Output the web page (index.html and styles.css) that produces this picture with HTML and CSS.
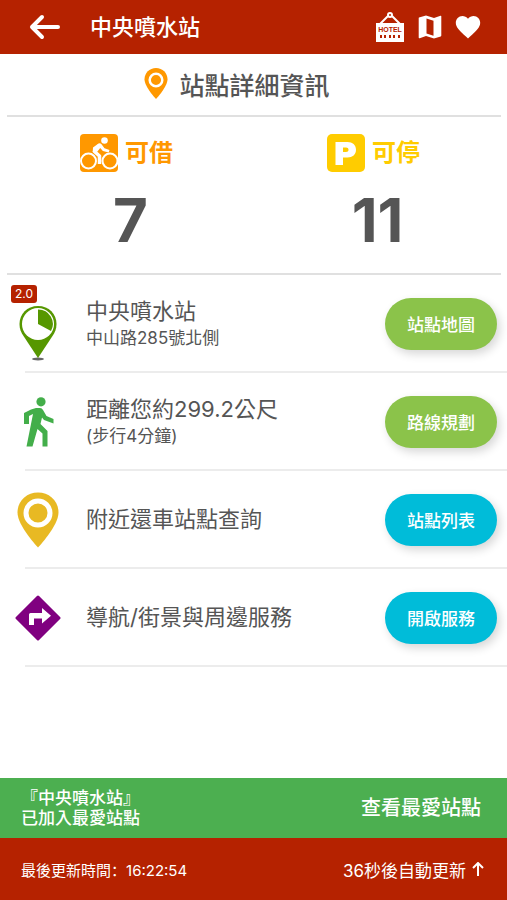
FILE: index.html
```html
<!DOCTYPE html>
<html lang="zh-Hant">
<head>
  <meta charset="UTF-8" />
  <meta name="viewport" content="width=device-width, initial-scale=1" />
  <title>中央噴水站</title>
  <link rel="stylesheet" href="styles.css">
</head>
<body>

<header class="topbar">
  <button class="icon-btn back" type="button" aria-label="返回">
    <svg width="32" height="28" viewBox="0 0 32 28" fill="none" stroke="#fff" stroke-width="4" stroke-linecap="round" stroke-linejoin="round"><path d="M14 4L4 14l10 10M4 14h26"/></svg>
  </button>
  <h1>中央噴水站</h1>
  <nav class="actions">
    <button class="icon-btn" type="button" aria-label="旅館">
      <svg width="30" height="30" viewBox="0 0 30 30">
        <path d="M5 12L13 4M17 4l8 8" fill="none" stroke="#fff" stroke-width="2"/>
        <circle cx="15" cy="3" r="2" fill="none" stroke="#fff" stroke-width="2"/>
        <path d="M1 11h28v19H1z" fill="#fff"/>
        <text x="15" y="20" class="hotel-text" text-anchor="middle">HOTEL</text>
        <path d="M5 23h2v3H5zM9 23h2v3H9zM14 23h2v3h-2zM18 23h2v3h-2zM23 23h2v3h-2z" fill="#b52200"/>
      </svg>
    </button>
    <button class="icon-btn" type="button" aria-label="地圖">
      <svg width="24" height="24" viewBox="0 0 24 24" fill="#fff"><path fill-rule="evenodd" d="M1 2.500L8 0.500l8 2.500 6.500-2.300q.8-.2.800.6V20.500q0 .7-.6.900L16 23.500 8 21 1.700 23.300q-1 .3-1-.7V3.200q0-.5.300-.7zM8.500 3.500v15l7 2.200v-15z"/></svg>
    </button>
    <button class="icon-btn" type="button" aria-label="最愛">
      <svg width="26" height="24" viewBox="0 0 26 24" fill="#fff"><path d="M13 23.500l-1.800-1.700C4.800 16 .8 12.300.8 7.800.8 4 3.700 1 7.400 1c2.100 0 4.200 1 5.600 2.700C14.400 2 16.500 1 18.600 1c3.700 0 6.600 3 6.600 6.800 0 4.500-4 8.200-10.400 14z"/></svg>
    </button>
  </nav>
</header>

<main>
  <h2 class="section-title">
    <svg width="24" height="31" viewBox="0 0 24 31"><path fill="#ff9800" d="M12 0C5.400 0 .5 5 .5 11.300.5 19 12 31 12 31s11.500-12 11.500-19.700C23.500 5 18.600 0 12 0z"/><circle cx="12" cy="12" r="6.300" fill="#ff9800" stroke="#fff" stroke-width="2.500"/></svg>
    站點詳細資訊
  </h2>

  <section class="stats">
    <div class="stat">
      <div class="stat-label rent">
        <svg width="38" height="38" viewBox="0 0 38 38">
          <rect width="38" height="38" rx="4" fill="#ff9800"/>
          <g fill="none" stroke="#fff" stroke-width="2"><circle cx="8.500" cy="27" r="7.500"/><circle cx="30" cy="27" r="7.500"/></g>
          <circle cx="24.500" cy="6.500" r="3.300" fill="#fff"/>
          <path d="M19 11.500L14.500 17.500l5 4.500v8" fill="none" stroke="#fff" stroke-width="3.500" stroke-linejoin="round"/>
          <path d="M13 13.500l5.500-4q1.700-.8 2.800.5l3.200 4.200 5 1.800-.8 2.500-5.800-1.500-2.700-3-4 5-3.500-1z" fill="#fff"/>
        </svg>
        可借
      </div>
      <div class="count">7</div>
    </div>
    <div class="stat">
      <div class="stat-label park">
        <svg width="38" height="38" viewBox="0 0 38 38">
          <rect width="38" height="38" rx="5" fill="#ffcc00"/>
          <path fill="#fff" fill-rule="evenodd" d="M8.500 8h12c5 0 8.500 3 8.500 7.800s-3.500 7.700-8.500 7.700h-4.500V31H8.500zM16 13.500v4.500h3c1.500 0 2.500-.8 2.500-2.200s-1-2.300-2.500-2.300z"/>
        </svg>
        可停
      </div>
      <div class="count">11</div>
    </div>
  </section>

  <ul class="rows">
    <li class="row">
      <div class="row-icon">
        <span class="version">2.0</span>
        <svg class="station-pin" width="40" height="56" viewBox="0 0 40 56">
          <ellipse cx="20" cy="53" rx="6" ry="1.500" fill="#666"/>
          <path fill="#569700" d="M20 0C9 0 1.500 8 1.500 18c0 5 1.500 8 4 12L20 52l14.500-22c2.500-4 4-7 4-12C38.500 8 31 0 20 0z"/>
          <circle cx="20" cy="18" r="16" fill="#fff"/>
          <path fill="#569700" d="M20 18V3.500A14.500 14.500 0 0 1 33 25z"/>
        </svg>
      </div>
      <div class="info">
        <p class="name">中央噴水站</p>
        <p class="sub">中山路285號北側</p>
      </div>
      <button class="pill green" type="button">站點地圖</button>
    </li>
    <li class="row">
      <div class="row-icon">
        <svg width="32" height="50" viewBox="0 0 32 50">
          <circle cx="19" cy="4.800" r="4.600" fill="#43ae4a"/>
          <path fill="#43ae4a" d="M9 12.500L14 11h4q2 0 3 2l3.500 6 7 3v4.500l-9.500-3.500-2-2.500-1.500 6.500 7 7v15.500h-5V36.500l-5-4.500L10.500 49.500H4.500L11 17l-4 2v8H2V16z"/>
        </svg>
      </div>
      <div class="info">
        <p class="name">距離您約299.2公尺</p>
        <p class="sub">(步行4分鐘)</p>
      </div>
      <button class="pill green" type="button">路線規劃</button>
    </li>
    <li class="row">
      <div class="row-icon">
        <svg width="42" height="56" viewBox="0 0 42 56"><path fill="#e8b923" d="M21 .5C9.500.5.500 9 .500 20.500.500 34 21 55.500 21 55.500S41.500 34 41.500 20.500C41.500 9 32.500.5 21 .5z"/><circle cx="21" cy="21" r="12" fill="#e8b923" stroke="#fff" stroke-width="5"/></svg>
      </div>
      <div class="info">
        <p class="name">附近還車站點查詢</p>
      </div>
      <button class="pill cyan" type="button">站點列表</button>
    </li>
    <li class="row">
      <div class="row-icon">
        <svg width="46" height="46" viewBox="0 0 46 46">
          <path fill="#800080" stroke="#800080" stroke-width="3" stroke-linejoin="round" d="M23 2l21 21-21 21L2 23z"/>
          <path fill="#fff" d="M14 30V19.500q0-1.500 1.500-1.500H27v-5l9 7.800-9 7.700v-5h-8V30z"/>
        </svg>
      </div>
      <div class="info">
        <p class="name">導航/街景與周邊服務</p>
      </div>
      <button class="pill cyan" type="button">開啟服務</button>
    </li>
  </ul>
</main>

<div class="snackbar">
  <p>『中央噴水站』<br>已加入最愛站點</p>
  <a href="#favorites">查看最愛站點</a>
</div>

<footer class="bottombar">
  <span class="updated">最後更新時間<span class="colon" lang="zh-Hans">：</span>16:22:54</span>
  <span class="refresh">36秒後自動更新
    <svg width="12" height="14" viewBox="0 0 12 14" fill="none" stroke="#fff" stroke-width="2"><path d="M1 6l5-5 5 5M6 1v13"/></svg>
  </span>
</footer>

</body>
</html>
```

FILE: styles.css
```css
* { box-sizing: border-box; }
body {
  margin: 0;
  min-height: 100vh;
  display: flex;
  flex-direction: column;
  background: #fff;
  color: #555;
  font-family: Inter, "Noto Sans CJK TC", sans-serif;
}
h1, h2, p, ul { margin: 0; padding: 0; font-weight: normal; }
svg { display: block; flex: none; }
button { border: 0; font-family: inherit; cursor: pointer; }

/* top bar */
.topbar {
  display: flex;
  align-items: center;
  height: 54px;
  padding: 0 26px 0 28px;
  background: #b52200;
  color: #fff;
}
.topbar h1 { flex: 1; font-size: 22px; font-weight: 500; line-height: 32px; }
.icon-btn { padding: 0; background: none; }
.back { margin-right: 30px; }
.actions { display: flex; align-items: center; gap: 13px; }
.hotel-text { font: 900 7px "Liberation Sans", sans-serif; fill: #b52200; }

main { flex: 1; }
.section-title {
  display: flex;
  align-items: center;
  justify-content: center;
  gap: 11px;
  height: 63px;
  margin: 0 6px 0 7px;
  padding: 0 34px 2px 0;
  border-bottom: 2px solid #e0e0e0;
  font-size: 25px;
  font-weight: 500;
}

/* available bikes / docks */
.stats {
  display: grid;
  grid-template-columns: 1fr 1fr;
  height: 158px;
  margin: 0 6px 0 7px;
  padding-top: 17px;
  border-bottom: 2px solid #e0e0e0;
}
.stat { text-align: center; }
.stat-label {
  display: flex;
  align-items: center;
  justify-content: center;
  gap: 7px;
  padding-right: 8px;
  font-size: 24px;
  font-weight: 700;
  line-height: 38px;
}
.rent { color: #ff9800; }
.park { color: #ffcc00; }
.count { margin-top: 12px; font-size: 60px; font-weight: 700; line-height: 72px; }

/* rows */
.rows { list-style: none; }
.row {
  display: flex;
  align-items: center;
  height: 98px;
  padding-right: 10px;
  background: linear-gradient(#ececec, #ececec) 25px 100% / 100% 2px no-repeat;
}
.row-icon {
  position: relative;
  display: flex;
  justify-content: center;
  width: 76px;
  margin-right: 10px;
}
.version {
  position: absolute;
  top: -1px;
  left: 11px;
  padding: 0 4px;
  border-radius: 3px;
  background: #b52200;
  color: #fff;
  font-size: 12px;
  line-height: 18px;
}
.station-pin { margin-top: 20px; }
.info { flex: 1; padding-bottom: 2px; }
.name { font-size: 22px; line-height: 30px; }
.sub { font-size: 17px; line-height: 24px; }
.pill {
  width: 112px;
  height: 52px;
  padding: 0 0 2px;
  border-radius: 26px;
  color: #fff;
  font-size: 17px;
  font-weight: 500;
  box-shadow: 3px 4px 10px rgba(0, 0, 0, .16);
}
.green { background: #8bc34a; }
.cyan { background: #00bcd9; }

/* bottom */
.snackbar, .bottombar {
  display: flex;
  align-items: center;
  justify-content: space-between;
  color: #fff;
}
.snackbar {
  height: 60px;
  padding: 0 26px 0 21px;
  background: #4caf50;
  font-size: 17px;
  font-weight: 500;
  line-height: 20px;
}
.snackbar p { font-weight: 500; }
.snackbar a { color: #fff; font-size: 20px; text-decoration: none; }
.bottombar {
  height: 62px;
  padding: 0 23px 0 21px;
  background: #b52200;
}
.updated { font-size: 15px; }
.colon { font-family: "Noto Sans CJK SC", sans-serif; }
.refresh { display: flex; align-items: center; gap: 6px; font-size: 17px; }
```
